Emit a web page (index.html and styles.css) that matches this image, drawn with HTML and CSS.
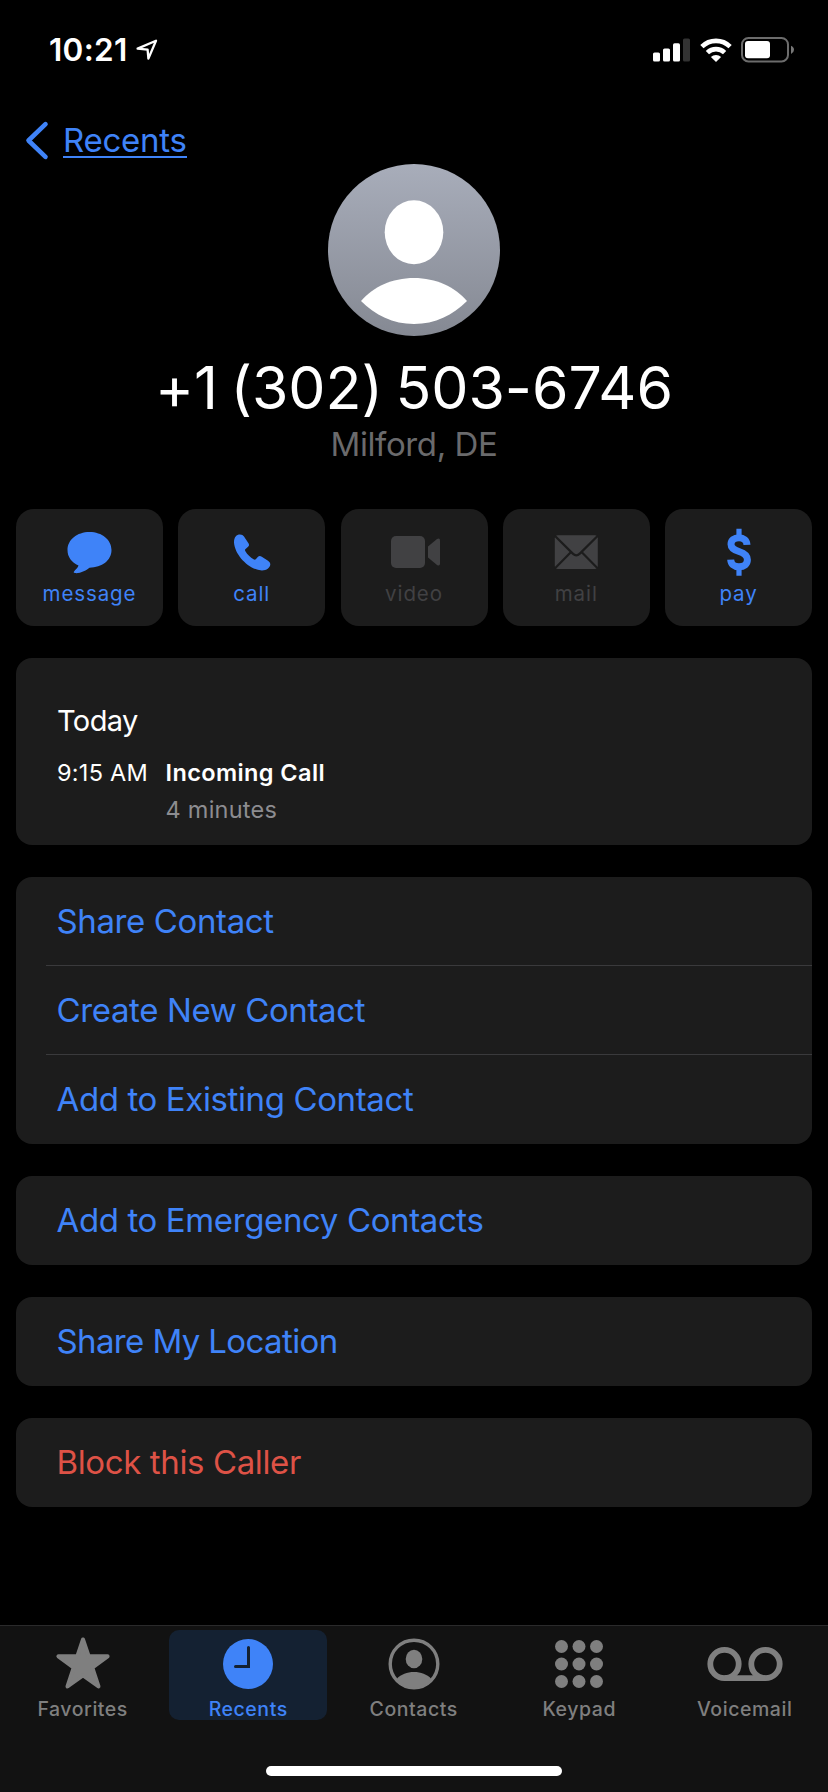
FILE: index.html
```html
<!DOCTYPE html>
<html lang="en">
<head>
<meta charset="utf-8">
<title>Recent call</title>
<link rel="stylesheet" href="styles.css">
</head>
<body>
<div class="screen">
  <header class="status">
    <div class="status-left">
      <span class="clock">10:21</span>
      <svg class="arrow" width="22" height="22" viewBox="0 0 22 22"><path d="M1.6 9.6 20 1.8 12.4 19.6 11.6 10.6Z" fill="none" stroke="#fff" stroke-width="2.3" stroke-linejoin="round"/></svg>
    </div>
    <div class="status-right">
      <svg width="37" height="24" viewBox="0 0 37 24" fill="#fff"><rect x="0" y="14.5" width="7" height="9" rx="1.6"/><rect x="10" y="10.5" width="7" height="13" rx="1.6"/><rect x="20" y="5.3" width="7" height="18.2" rx="1.6"/><rect x="30" y=".5" width="7" height="23" rx="1.6" fill="#333"/></svg>
      <svg width="32" height="24" viewBox="0 0 32 24"><path d="M1.9 8.7A20 20 0 0 1 30.1 8.7" fill="none" stroke="#fff" stroke-width="4.6"/><path d="M7.4 14.6A12.3 12.3 0 0 1 24.6 14.6" fill="none" stroke="#fff" stroke-width="4.6"/><path d="M10.9 19A7.4 7.4 0 0 1 21.1 19L16 24Z" fill="#fff"/></svg>
      <svg width="54" height="26" viewBox="0 0 54 26"><rect x="1" y="1" width="46" height="23.4" rx="6.5" fill="none" stroke="#6c6c6c" stroke-width="2"/><rect x="4" y="4" width="25" height="17.3" rx="3" fill="#fff"/><path d="M50 8.7Q53 10 53 12.8Q53 15.6 50 17Z" fill="#777"/></svg>
    </div>
  </header>

  <nav class="nav">
    <svg width="24" height="38" viewBox="0 0 24 38"><path d="M19.500 2.200 2.500 18.500 19.500 34.800" fill="none" stroke="#3f83f8" stroke-width="4.6" stroke-linecap="round" stroke-linejoin="round"/></svg>
    <a class="back">Recents</a>
  </nav>

  <section class="profile">
    <svg class="avatar" width="172" height="172" viewBox="0 0 172 172">
      <defs><linearGradient id="shade" x1="0" y1="0" x2="0" y2="1"><stop offset="0" stop-color="#a8adba"/><stop offset="1" stop-color="#858993"/></linearGradient></defs>
      <circle cx="86" cy="86" r="86" fill="url(#shade)"/>
      <ellipse cx="86" cy="68.3" rx="29.3" ry="32" fill="#fff"/>
      <path d="M33 137C45 123 64 114 86 114S127 123 139 137C125 151 107 160 86 160S47 151 33 137Z" fill="#fff"/>
    </svg>
    <h1 class="number">+1 (302) 503-6746</h1>
    <p class="place">Milford, DE</p>
  </section>

  <section class="actions">
    <button class="action">
      <svg width="50" height="50" viewBox="0 0 50 50"><path d="M24.500 5C37 5 46.500 12.800 46.500 23.100S37 40.700 24.500 40.700C22 43 14.500 46.800 10.100 46.100C8.100 45.700 8.500 44.800 9.800 43.500C11.500 42 12.700 40.500 13.500 38.500C6.500 35.500 2.500 30 2.500 23.100C2.500 12.800 12 5 24.500 5Z" fill="currentColor"/></svg>
      <span>message</span>
    </button>
    <button class="action">
      <svg width="50" height="50" viewBox="0 0 50 50"><path d="M7 15.500C7 10 9.500 7.500 13 7.500C15 7.500 16 8.200 17 9.600L21.300 16C22.400 17.700 22.300 18.600 20.800 20L18.600 22C17.800 22.800 17.800 23.200 18.400 24.300C20.300 27.600 23.500 30.500 26.500 32.300C27.600 33 28.200 32.900 29 32L31 29.800C32.200 28.700 33.200 28.700 34.800 29.700L41 33.800C42.700 35 43.300 36 43.300 37.600C43 41 39.500 43.600 34.800 43.500C21.500 42.500 7.800 28 7 15.500Z" fill="currentColor"/></svg>
      <span>call</span>
    </button>
    <button class="action off">
      <svg width="50" height="50" viewBox="0 0 50 50" fill="currentColor"><rect x="2" y="9" width="34" height="32" rx="5"/><path d="M39 19.500 48 12Q51 10.500 51 13.500V36.500Q51 39.500 48 38L39 30.500Z"/></svg>
      <span>video</span>
    </button>
    <button class="action off">
      <svg width="50" height="50" viewBox="0 0 50 50"><rect x="3.800" y="8.300" width="43" height="33.700" rx="3" fill="currentColor"/><path d="M3.800 8.800 21.800 26.600Q25.300 30 28.800 26.600L46.800 8.800M3.800 41.500 19.800 25.200M46.800 41.500 30.800 25.200" fill="none" stroke="#1c1c1c" stroke-width="2.200"/></svg>
      <span>mail</span>
    </button>
    <button class="action">
      <svg width="50" height="50" viewBox="0 0 50 50"><path d="M25 1.800V9M25 41V48.700" stroke="currentColor" stroke-width="5.200"/><path d="M33 17.800C32.800 13.500 29.500 10.700 25 10.700C20.200 10.700 17 13.300 17 17.200C17 21 19.500 22.800 25 24.500C30.500 26.200 33.400 28.500 33.400 32.800C33.400 37.200 30 39.800 25 39.800C20 39.800 16.900 37 16.700 32.600" fill="none" stroke="currentColor" stroke-width="7"/></svg>
      <span>pay</span>
    </button>
  </section>

  <main class="cards">
    <section class="card log">
      <h2 class="day">Today</h2>
      <div class="entry">
        <span class="time">9:15 AM</span>
        <div class="detail"><span class="kind">Incoming Call</span><span class="length">4 minutes</span></div>
      </div>
    </section>
    <section class="card">
      <a class="row">Share Contact</a>
      <a class="row">Create New Contact</a>
      <a class="row">Add to Existing Contact</a>
    </section>
    <section class="card"><a class="row">Add to Emergency Contacts</a></section>
    <section class="card"><a class="row location">Share My Location</a></section>
    <section class="card"><a class="row danger">Block this Caller</a></section>
  </main>

  <footer class="tabs">
    <div class="tab-row">
      <a class="tab">
        <svg width="76" height="54" viewBox="0 0 76 54"><path d="M38 4.500 43.700 21.300H62.600L47.300 32.700 53.500 51.500 38 40.300 22.500 51.500 28.700 32.700 13.400 21.300H32.300Z" fill="currentColor" stroke="currentColor" stroke-width="4" stroke-linejoin="round"/></svg>
        <span>Favorites</span>
      </a>
      <a class="tab active">
        <svg width="76" height="54" viewBox="0 0 76 54"><circle cx="38" cy="29" r="25" fill="currentColor"/><path d="M38.500 12.500V31.500H25.500" fill="none" stroke="#142132" stroke-width="3" stroke-linecap="round"/></svg>
        <span>Recents</span>
      </a>
      <a class="tab">
        <svg width="76" height="54" viewBox="0 0 76 54"><circle cx="38" cy="29" r="23.800" fill="none" stroke="currentColor" stroke-width="3.400"/><ellipse cx="38" cy="24" rx="8.300" ry="9.200" fill="currentColor"/><path d="M21 43.500C25 39.500 31 37 38 37S51 39.500 55 43.500C51 50 45 53 38 53S25 50 21 43.500Z" fill="currentColor"/></svg>
        <span>Contacts</span>
      </a>
      <a class="tab">
        <svg width="76" height="54" viewBox="0 0 76 54" fill="currentColor"><circle cx="20.500" cy="11.500" r="6.500"/><circle cx="38" cy="11.500" r="6.500"/><circle cx="55.500" cy="11.500" r="6.500"/><circle cx="20.500" cy="29" r="6.500"/><circle cx="38" cy="29" r="6.500"/><circle cx="55.500" cy="29" r="6.500"/><circle cx="20.500" cy="46.500" r="6.500"/><circle cx="38" cy="46.500" r="6.500"/><circle cx="55.500" cy="46.500" r="6.500"/></svg>
        <span>Keypad</span>
      </a>
      <a class="tab">
        <svg width="76" height="54" viewBox="0 0 76 54"><g fill="none" stroke="currentColor" stroke-width="5.800"><circle cx="17.500" cy="29" r="14.200"/><circle cx="58.500" cy="29" r="14.200"/><path d="M17.500 43.200H58.500"/></g></svg>
        <span>Voicemail</span>
      </a>
    </div>
    <div class="home"></div>
  </footer>
</div>
</body>
</html>
```
FILE: styles.css
```css
* { box-sizing: border-box; margin: 0; padding: 0; }
body { background: #000; font-family: Inter, "Liberation Sans", sans-serif; color: #fff; }
svg { display: block; flex: none; overflow: visible; }
.screen { width: 828px; height: 1792px; display: flex; flex-direction: column; }

.status { height: 100px; padding: 0 33px 0 49px; display: flex; justify-content: space-between; align-items: center; }
.status-left { display: flex; gap: 8px; align-items: center; }
.clock { font-size: 31.5px; font-weight: 600; line-height: 40px; letter-spacing: .3px; }
.status-right { display: flex; gap: 9.5px; align-items: center; }

.nav { height: 64px; padding: 17px 0 0 26px; display: flex; align-items: center; gap: 13px; }
.back { height: 38px; margin-top: -3px; padding-top: 1px; font-size: 33px; line-height: 38px; color: #3f83f8; border-bottom: 2px solid #3f83f8; letter-spacing: -.25px; }

.profile { height: 345px; display: flex; flex-direction: column; align-items: center; }
.number { margin-top: 16px; font-size: 59px; font-weight: 400; line-height: 72px; letter-spacing: -.05px; word-spacing: -4px; }
.place { font-size: 33px; line-height: 40px; color: #6a6a6c; letter-spacing: -.4px; font-weight: 400; }

.actions { height: 117px; padding: 0 16px; display: grid; grid-template-columns: repeat(5, 147px); justify-content: space-between; }
.action { border: 0; border-radius: 18px; background: #1c1c1c; color: #3f83f8; font-family: inherit; display: flex; flex-direction: column; justify-content: flex-start; align-items: center; padding-top: 18px; }
.action span { font-size: 20.5px; line-height: 24px; margin-top: 5px; letter-spacing: .9px; }
.action.off { color: #414143; }

.cards { padding: 32px 16px 0; display: flex; flex-direction: column; gap: 32px; flex: 1; }
.card { background: #1c1c1c; border-radius: 16px; }
.log { height: 187px; padding: 42px 41px 0; }
.day { font-size: 29px; font-weight: 400; line-height: 41px; letter-spacing: -.6px; }
.entry { display: flex; margin-top: 13px; font-size: 23.5px; line-height: 37px; }
.time { width: 108.5px; letter-spacing: .25px; }
.detail { display: flex; flex-direction: column; }
.kind { font-weight: 600; letter-spacing: .4px; }
.length { color: #8c8c90; letter-spacing: .25px; }
.row { display: block; height: 89px; padding-left: 40.5px; font-size: 33px; line-height: 88px; color: #3f83f8; letter-spacing: -.38px; }
.row:first-child:not(:last-child) { height: 88px; }
.row + .row { margin-left: 30px; padding-left: 10.5px; border-top: 1px solid #3a3a3c; line-height: 89px; }
.row + .row:last-child { height: 90px; }
.location { letter-spacing: -.62px; }
.danger { color: #de5246; }

.tabs { height: 167px; background: #121212; border-top: 1px solid #2a2a2b; padding: 4px 3.7px 0; }
.tab-row { display: flex; gap: 7.5px; }
.tab { width: 158px; flex: none; height: 90px; border-radius: 10px; display: flex; flex-direction: column; align-items: center; color: #7f7f7f; padding-top: 5px; }
.tab span { font-size: 19.5px; font-weight: 500; line-height: 24px; margin-top: 8px; letter-spacing: .55px; }
.tab.active { background: #142132; color: #3f83f8; }
.home { width: 296px; height: 10px; border-radius: 5px; background: #fff; margin: 46px auto 0; }
```
